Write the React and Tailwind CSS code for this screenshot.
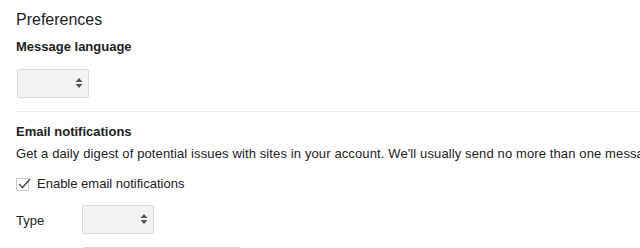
import { useState } from "react";

const SelectArrows = () => (
  <svg width="8" height="11" viewBox="0 0 8 11" className="text-[#555]">
    <path d="M4 0 L7.5 4 L0.5 4 Z" fill="currentColor" />
    <path d="M0.5 6 L7.5 6 L4 10 Z" fill="currentColor" />
  </svg>
);

const FakeSelect = () => (
  <div className="w-[72px] h-[29px] rounded-[2px] border border-[#d9d9d9] bg-[#f3f3f3] flex items-center justify-end pr-[5px]">
    <SelectArrows />
  </div>
);

const Checkbox = ({ checked, onToggle }) => (
  <div
    onClick={onToggle}
    className="w-[13px] h-[13px] border border-[#c6c6c6] rounded-[1px] bg-white relative cursor-pointer"
  >
    {checked && (
      <svg
        width="15"
        height="13"
        viewBox="0 0 15 13"
        className="absolute left-[0px] top-[-2px]"
      >
        <path
          d="M2 7 L5.5 10.5 L13 2"
          fill="none"
          stroke="#555"
          strokeWidth="1.6"
        />
      </svg>
    )}
  </div>
);

const App = () => {
  const [enabled, setEnabled] = useState(true);

  return (
    <div className="w-[640px] h-[248px] overflow-hidden bg-white text-[#222] font-['Liberation_Sans',Arial,sans-serif]">
      <div className="pl-4 pt-[10px]">
        <h1 className="text-[16px] leading-[20px] font-normal">Preferences</h1>
        <h2 className="mt-[9px] text-[13px] leading-[16px] font-bold">
          Message language
        </h2>
        <div className="mt-[14px] pl-[1px]">
          <FakeSelect />
        </div>
      </div>
      <div className="ml-[15px] mt-[13px] h-px bg-[#ebebeb]" />
      <div className="pl-4">
        <h2 className="mt-[12px] text-[13px] leading-[16px] font-bold">
          Email notifications
        </h2>
        <p className="mt-[6px] text-[13px] leading-[16px] tracking-[0.12px] whitespace-nowrap overflow-hidden">
          Get a daily digest of potential issues with sites in your account.
          We'll usually send no more than one message a day.
        </p>
        <label className="mt-[14px] flex items-center gap-[8px] text-[13px] leading-[16px]">
          <Checkbox checked={enabled} onToggle={() => setEnabled(!enabled)} />
          <span>Enable email notifications</span>
        </label>
        <div className="mt-[13px] flex items-start text-[13px] leading-[16px]">
          <span className="w-[66px] pt-[8px]">Type</span>
          <FakeSelect />
        </div>
        <div className="mt-[13px] ml-[67px] w-[158px] h-[29px] border border-[#d9d9d9] rounded-[1px] bg-white" />
      </div>
    </div>
  );
};

export default App;
